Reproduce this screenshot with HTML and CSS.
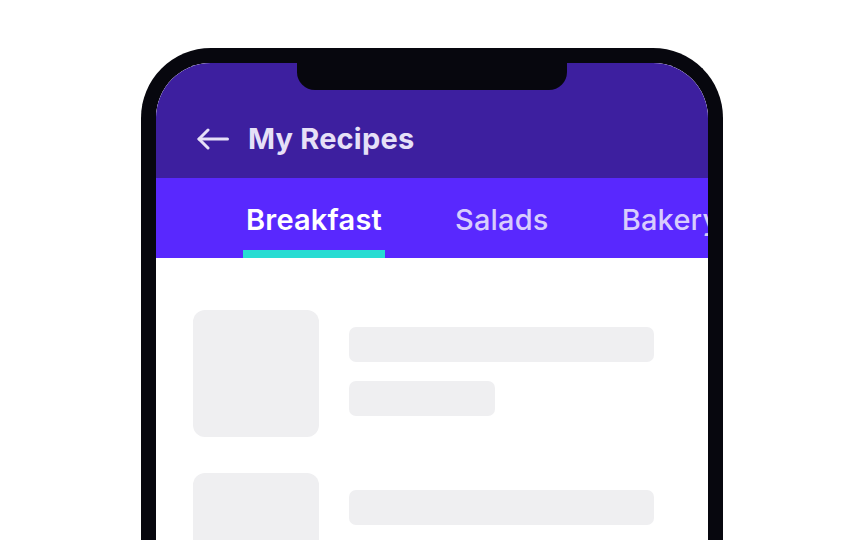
FILE: index.html
```html
<!DOCTYPE html>
<html lang="en">
<head>
  <meta charset="UTF-8">
  <title>My Recipes</title>
  <link rel="stylesheet" href="styles.css">
</head>
<body>
  <div class="phone">
    <div class="screen">
      <div class="notch"></div>

      <header class="app-bar">
        <svg class="back" width="32" height="22" viewBox="0 0 32 22" fill="none" stroke="currentColor" stroke-width="3" stroke-linecap="round" stroke-linejoin="round">
          <path d="M30.5 11H2"/>
          <path d="M11 2L2 11l9 9"/>
        </svg>
        <h1>My Recipes</h1>
      </header>

      <nav class="tabs">
        <div class="tab active">Breakfast</div>
        <div class="tab">Salads</div>
        <div class="tab">Bakery</div>
      </nav>

      <div class="list">
        <div class="item">
          <div class="thumb"></div>
          <div class="lines">
            <div class="line"></div>
            <div class="line short"></div>
          </div>
        </div>
        <div class="item">
          <div class="thumb"></div>
          <div class="lines">
            <div class="line"></div>
            <div class="line short"></div>
          </div>
        </div>
      </div>
    </div>
  </div>
</body>
</html>
```

FILE: styles.css
```css
body {
  margin: 0;
  background: #ffffff;
  font-family: Inter, "Noto Sans", sans-serif;
  display: flex;
  justify-content: center;
  padding-top: 48px;
  height: 492px;
  overflow: hidden;
}
.phone {
  width: 552px;
  height: 492px;
  border: 15px solid #07070e;
  border-bottom: none;
  border-radius: 70px 70px 0 0;
  overflow: hidden;
}
.screen {
  position: relative;
  height: 100%;
  background: #ffffff;
}
.notch {
  position: absolute;
  top: 0;
  left: 141px;
  width: 270px;
  height: 27px;
  background: #07070e;
  border-radius: 0 0 18px 18px;
}
.app-bar {
  height: 115px;
  box-sizing: border-box;
  padding: 36px 0 0 41px;
  background: #3d1f9f;
  display: flex;
  align-items: center;
  gap: 19px;
  color: #e6e0f7;
}
.back {
  display: block;
}
.app-bar h1 {
  margin: 0;
  font-size: 29px;
  font-weight: 700;
  line-height: 38px;
  letter-spacing: 0.2px;
}
.tabs {
  height: 80px;
  background: #5928fe;
  display: flex;
  gap: 67px;
  padding-left: 87px;
  white-space: nowrap;
}
.tab {
  height: 80px;
  box-sizing: border-box;
  padding: 11px 3px 0;
  border-bottom: 8px solid transparent;
  display: flex;
  align-items: center;
  font-size: 29px;
  font-weight: 500;
  letter-spacing: 0.2px;
  color: #d8cdfd;
}
.tab.active {
  color: #ffffff;
  font-weight: 600;
  border-bottom-color: #27dcd2;
}
.list {
  padding: 52px 54px 0 37px;
  display: flex;
  flex-direction: column;
  gap: 36px;
}
.item {
  display: flex;
  gap: 30px;
}
.thumb {
  width: 126px;
  height: 127px;
  border-radius: 12px;
  background: #efeff1;
  flex-shrink: 0;
}
.lines {
  flex: 1;
  padding-top: 17px;
  display: flex;
  flex-direction: column;
  gap: 19px;
}
.line {
  height: 35px;
  border-radius: 7px;
  background: #efeff1;
}
.line.short {
  width: 146px;
}
```
